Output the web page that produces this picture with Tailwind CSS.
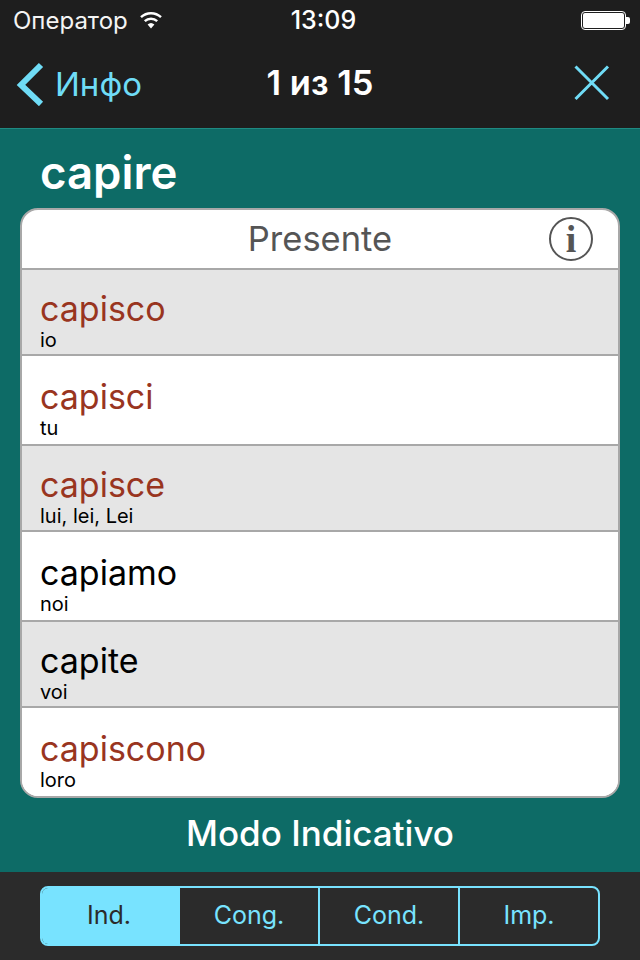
<!DOCTYPE html>
<html><head><meta charset="utf-8">
<script src="https://cdn.jsdelivr.net/npm/@tailwindcss/browser@4"></script>
</head>
<body class="m-0">
<div class="w-[640px] h-[960px] flex flex-col bg-[#0d6b66] overflow-hidden font-['Inter','Noto_Sans',sans-serif]">
  <header class="h-[128px] bg-[#1e1e1e] text-white shrink-0">
    <div class="h-[40px] relative flex items-center pl-[13px] pr-[13px]">
      <span class="text-[24px] leading-none text-[#f4f4f4] pt-[1px]">Оператор</span>
      <svg class="ml-[10px]" width="26" height="20" viewBox="0 0 26 20"><path d="M13 18.5 L9.6 14.6 A5 5 0 0 1 16.4 14.6Z" fill="#fff"/><path d="M6.8 11.2 A9 9 0 0 1 19.2 11.2" fill="none" stroke="#fff" stroke-width="2.4"/><path d="M3 7.2 A14.5 14.5 0 0 1 23 7.2" fill="none" stroke="#fff" stroke-width="2.4"/></svg>
      <span class="absolute left-0 right-0 text-center text-[25px] leading-none font-medium pl-[7px] pt-[1px]">13:09</span>
      <div class="ml-auto flex items-center mr-[-3px]">
        <div class="w-[45px] h-[19px] border border-white rounded-[4px] p-[1px]"><div class="w-full h-full bg-white rounded-[2px]"></div></div>
        <div class="w-[4px] h-[7px] bg-white rounded-r-[2px]"></div>
      </div>
    </div>
    <div class="h-[88px] relative flex items-center pb-[3px]">
      <svg class="absolute left-[16px] top-[22px]" width="28" height="44" viewBox="0 0 28 44"><path d="M25 3 L5 23 L25 42" fill="none" stroke="#6fdcf6" stroke-width="6"/></svg>
      <span class="absolute left-[55px] top-[24px] text-[33px] leading-[40px] text-[#6fdcf6]">Инфо</span>
      <span class="w-full text-center text-[34.5px] leading-[40px] font-semibold">1 из 15</span>
      <svg class="absolute left-[572px] top-[23px]" width="40" height="40" viewBox="0 0 40 40"><path d="M3.5 3.5 L36 36 M36 3.5 L3.5 36" fill="none" stroke="#6fdcf6" stroke-width="3"/></svg>
    </div>
  </header>
  <main class="flex-1 flex flex-col border-t border-[#1f8a82] px-[20px]">
    <h1 class="h-[79px] pl-[20px] pt-[18px] text-[45.5px] leading-[52px] font-semibold text-white">capire</h1>
    <section class="h-[590px] bg-white border-2 border-[#a8a8a8] rounded-[18px] overflow-hidden flex flex-col">
      <div class="h-[58px] shrink-0 relative flex items-center justify-center text-[34.5px] text-[#555555]">Presente
        <div class="absolute left-[527px] top-[7px] w-[44px] h-[44px] rounded-full border-2 border-[#555555] flex items-center justify-center text-[38px] font-bold leading-none font-['Liberation_Serif',serif]">i</div>
      </div>
      <div class="h-[86px] shrink-0 bg-[#e5e5e5] border-t-2 border-[#a8a8a8] pl-[18px] pt-[19px]"><div class="text-[34px] leading-[40px] text-[#99351f]">capisco</div><div class="text-[20px] leading-[22px] text-black">io</div></div>
      <div class="h-[90px] shrink-0 bg-white border-t-2 border-[#a8a8a8] pl-[18px] pt-[21px]"><div class="text-[34px] leading-[40px] text-[#99351f]">capisci</div><div class="text-[20px] leading-[22px] text-black">tu</div></div>
      <div class="h-[86px] shrink-0 bg-[#e5e5e5] border-t-2 border-[#a8a8a8] pl-[18px] pt-[19px]"><div class="text-[34px] leading-[40px] text-[#99351f]">capisce</div><div class="text-[20px] leading-[22px] text-black">lui, lei, Lei</div></div>
      <div class="h-[90px] shrink-0 bg-white border-t-2 border-[#a8a8a8] pl-[18px] pt-[21px]"><div class="text-[34px] leading-[40px] text-black">capiamo</div><div class="text-[20px] leading-[22px] text-black">noi</div></div>
      <div class="h-[86px] shrink-0 bg-[#e5e5e5] border-t-2 border-[#a8a8a8] pl-[18px] pt-[19px]"><div class="text-[34px] leading-[40px] text-black">capite</div><div class="text-[20px] leading-[22px] text-black">voi</div></div>
      <div class="flex-1 bg-white border-t-2 border-[#a8a8a8] pl-[18px] pt-[21px]"><div class="text-[34px] leading-[40px] text-[#99351f]">capiscono</div><div class="text-[20px] leading-[22px] text-black">loro</div></div>
    </section>
    <div class="flex-1 flex items-center justify-center text-[35px] font-medium text-white pb-[4px]">Modo Indicativo</div>
  </main>
  <footer class="h-[88px] shrink-0 bg-[#2b2b2b] pt-[14px] px-[40px]">
    <div class="h-[60px] w-[560px] flex border-2 border-[#78e3ff] rounded-[8px] overflow-hidden text-[25px] text-[#78e3ff]">
      <div class="w-[138px] bg-[#78e3ff] text-[#2b2b2b] flex items-center justify-center pr-[4px]">Ind.</div>
      <div class="w-[140px] border-r-2 border-[#78e3ff] flex items-center justify-center">Cong.</div>
      <div class="w-[140px] border-r-2 border-[#78e3ff] flex items-center justify-center">Cond.</div>
      <div class="flex-1 flex items-center justify-center">Imp.</div>
    </div>
  </footer>
</div>
</body></html>
